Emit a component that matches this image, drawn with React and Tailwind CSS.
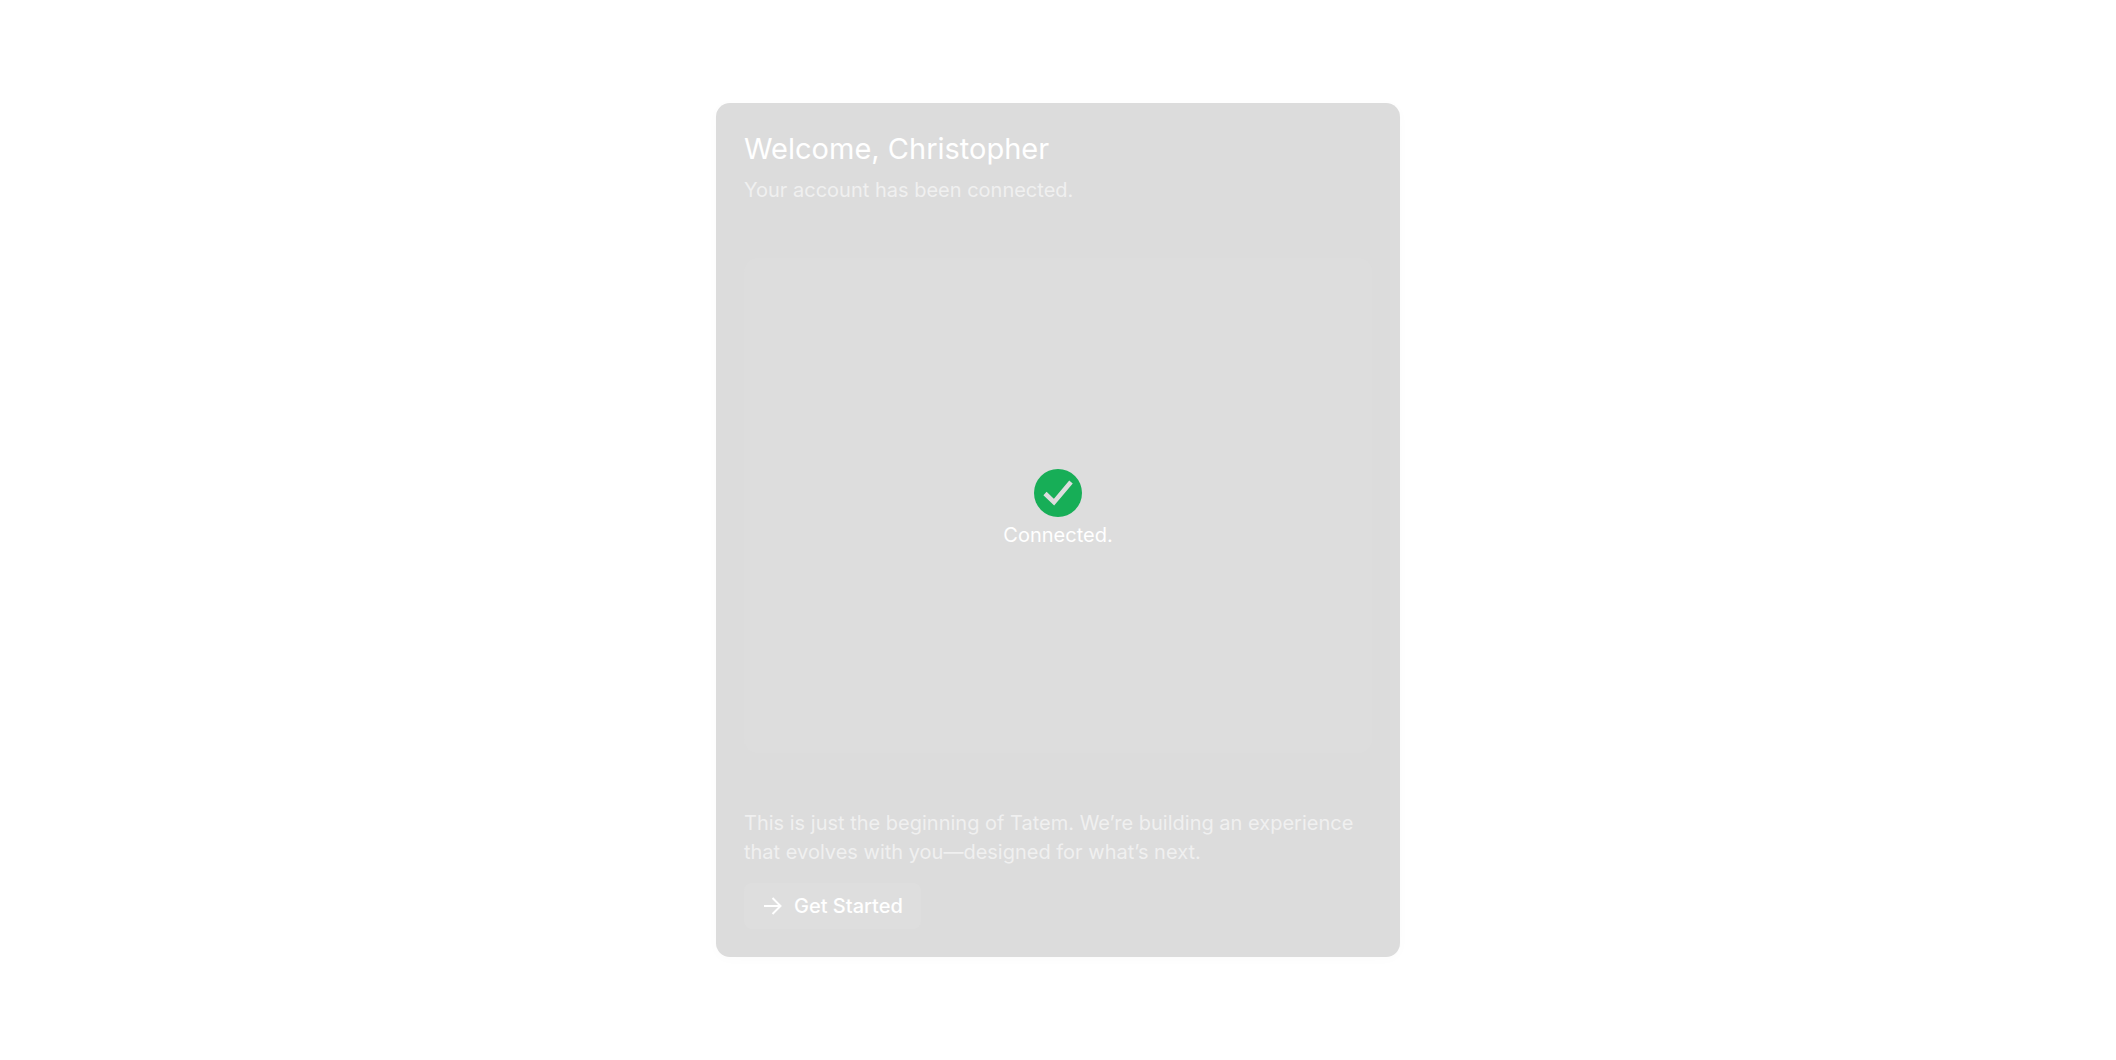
import React from 'react';
import clsx from 'clsx';

// Solid disc with the tick left in the card colour
const ConnectedIcon = () => (
  <svg viewBox="0 0 48 48" className="size-12" aria-hidden="true">
    <circle cx="24" cy="24" r="24" fill="#17ae57" />
    <path d="M11 24.5l9 8.7L37 13" fill="none" stroke="#dddddd" strokeWidth="4.6" />
  </svg>
);

const ArrowIcon = () => (
  <svg viewBox="0 0 18 18" className="size-[18px]" fill="none" stroke="currentColor" strokeWidth="2" aria-hidden="true">
    <path d="M0 9h16M8.5 1l8 8-8 8" />
  </svg>
);

const BodyText = ({ className, children }) => (
  <p className={clsx('text-[20px] leading-[29px]', className)}>{children}</p>
);

const App = () => {
  return (
    <main className="flex min-h-screen items-center justify-center bg-white font-['Inter',sans-serif]">
      <section className="flex w-full max-w-[684px] flex-col rounded-[14px] bg-[#dcdcdc] p-7 text-white shadow-[0_2px_12px_rgba(0,0,0,0.02)]">
        <header className="flex flex-col gap-2.5">
          <h1 className="text-[29px] leading-[35px]">Welcome, Christopher</h1>
          <BodyText className="text-[#f0f0f0]">Your account has been connected.</BodyText>
        </header>

        <div className="mt-[53px] mb-14 flex min-h-[495px] flex-col items-center justify-center gap-1 rounded-[14px] bg-[#dddddd] pt-2">
          <ConnectedIcon />
          <BodyText>Connected.</BodyText>
        </div>

        <BodyText className="text-[#f0f0f0]">
          This is just the beginning of Tatem. We’re building an experience that evolves with you—designed for what’s next.
        </BodyText>

        <button
          type="button"
          className="mt-4 flex h-[46px] items-center gap-3 self-start rounded-lg bg-[#dedede] pr-[18px] pl-5 text-[20px] font-medium"
        >
          <ArrowIcon />
          Get Started
        </button>
      </section>
    </main>
  );
};

export default App;
